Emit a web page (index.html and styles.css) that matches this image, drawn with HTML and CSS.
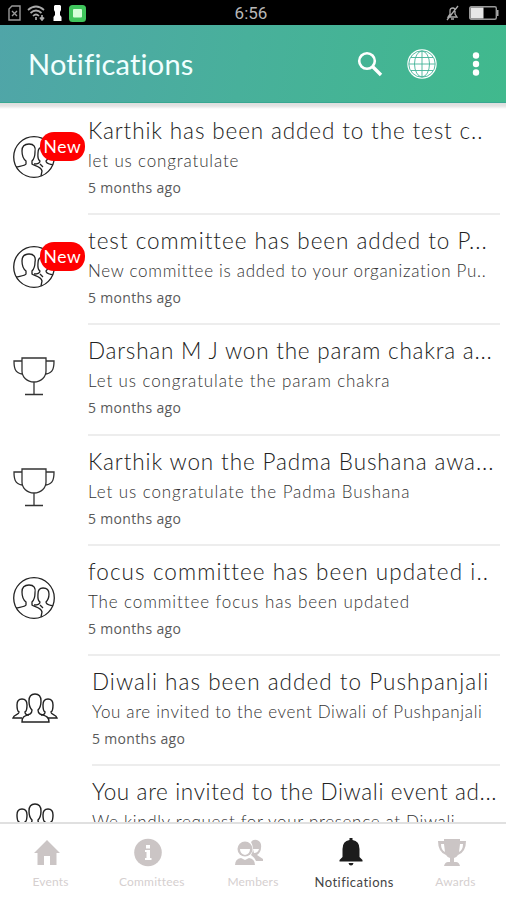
FILE: index.html
```html
<!DOCTYPE html>
<html lang="en">
<head>
<meta charset="utf-8">
<title>Notifications</title>
<link rel="stylesheet" href="styles.css">
</head>
<body>
<svg class="defs" width="0" height="0" aria-hidden="true">
  <defs>
    <symbol id="committee" viewBox="0 0 46 46">
      <g fill="none" stroke="#222" stroke-width="1.3">
        <circle cx="22" cy="23" r="20.3"/>
        <path d="M4 33C8 32 13 32 14 30V27C10 24 10 20 10 17C10 12 12 10 17 10C22 10 24 13 23 18C23 22 22 25 20 27V30C22 32 29 32 30 37L29 42"/>
        <path d="M22 30C25 30 28 30 28 27C25 25 26 21 26 19C26 15 28 13 31 13C35 13 37 15 37 19C37 23 36 25 34 27C34 30 38 30 41 31M28 30L31 33"/>
      </g>
    </symbol>
    <symbol id="trophy" viewBox="0 0 46 46">
      <g fill="none" stroke="#333" stroke-width="1.3">
        <path d="M10 4H34V17C34 23 29 28 22 28S10 23 10 17ZM10 7H2C2 14 3 19 10 20M34 7H42C42 14 41 19 34 20M22 28V40M13 40.500H31"/>
      </g>
    </symbol>
    <symbol id="group" viewBox="0 0 46 46">
      <g fill="none" stroke="#222" stroke-width="1.4">
        <path d="M18 29C20 28 20 26 20 25C17 22 17 19 17 16C17 11 19 9 23 9S29 11 29 16C29 19 29 22 26 25C26 26 26 28 28 29C33 31 37 31 37 37H10C10 31 13 31 18 29Z"/>
        <path d="M17 30C14 30 13 29 13 27C15 26 15 22 15 20C15 15 13 14 10 14S5 15 5 20C5 23 5 26 7 27C7 30 2 29 1 33H10M29 30C32 30 33 29 33 27C31 26 31 22 31 20C31 15 33 14 36 14S41 15 41 20C41 23 41 26 39 27C39 30 44 29 45 33H36"/>
      </g>
    </symbol>
  </defs>
</svg>
<div class="screen">
  <div class="status">
    <div class="status-left">
      <svg width="13" height="16" viewBox="0 0 13 16" fill="none" stroke="#999" stroke-width="1.4"><path d="M4 1H12V15H1V4ZM4 6L9 11M9 6L4 11"/></svg>
      <svg class="wifi" width="18" height="16" viewBox="0 0 18 16" fill="none" stroke="#aaa" stroke-width="1.7"><path d="M1 5Q9 -2 17 5M3.500 8Q9 3 14.500 8M6 11Q9 8 12 11M9 12V15M15 10V14M13 12.500L15 15L17 12.500"/></svg>
      <svg class="key" width="9" height="16" viewBox="0 0 9 16" fill="#fff"><path d="M2 0H7L8 1V5L7 7V10L8.500 12V16H.5V12L2 10V7L1 5V1Z"/></svg>
      <svg width="17" height="17" viewBox="0 0 17 17"><rect width="17" height="17" rx="3.500" fill="#40c55c"/><rect x="4" y="4" width="9" height="8.500" rx="1" fill="#d5ffd9"/></svg>
    </div>
    <div class="clock">6:56</div>
    <div class="status-right">
      <svg width="13" height="16" viewBox="0 0 13 16" fill="none" stroke="#aaa" stroke-width="1.300"><path d="M2 12L4 9V6Q4 3 7 3Q9 3 9 6V9L11 12ZM12 1L1 15M5 14H8"/></svg>
      <svg width="30" height="14" viewBox="0 0 30 14"><rect x=".7" y=".7" width="26.600" height="12.600" rx="1.500" fill="none" stroke="#999" stroke-width="1.400"/><rect x="1.500" y="1.500" width="13" height="11" fill="#e7e7e7"/><path d="M28 4H29.500V10H28Z" fill="#aaa"/></svg>
    </div>
  </div>
  <header class="bar">
    <h1>Notifications</h1>
    <div class="actions">
      <svg width="26" height="26" viewBox="0 0 26 26" fill="none" stroke="#fff"><circle cx="10" cy="10" r="7.800" stroke-width="2.600"/><path d="M15.500 15.500L24 24" stroke-width="3.400"/></svg>
      <svg class="globe" width="30" height="30" viewBox="0 0 30 30"><circle cx="15" cy="15" r="14.700" fill="#fff"/><g fill="none" stroke="#44b399" stroke-width=".9"><circle cx="15" cy="15" r="13.200"/><ellipse cx="15" cy="15" rx="7.500" ry="12.900"/><path d="M15 2V28M2 15H28M4 8.500H26M4 21.500H26"/></g></svg>
      <svg class="dots" width="8" height="24" viewBox="0 0 8 24" fill="#fff"><circle cx="4" cy="3.500" r="3.200"/><circle cx="4" cy="12" r="3.200"/><circle cx="4" cy="20.500" r="3.200"/></svg>
    </div>
  </header>
  <main class="list">
    <article class="row"><div class="pic"><svg><use href="#committee"/></svg><span class="new">New</span></div><div class="text"><h2 class="t1">Karthik has been added to the test c..</h2><p class="s1">let us congratulate</p><time>5 months ago</time></div></article>
    <article class="row"><div class="pic"><svg><use href="#committee"/></svg><span class="new">New</span></div><div class="text"><h2 class="t2">test committee has been added to P...</h2><p class="s2">New committee is added to your organization Pu..</p><time>5 months ago</time></div></article>
    <article class="row"><div class="pic"><svg><use href="#trophy"/></svg></div><div class="text"><h2 class="t3">Darshan M J won the param chakra a...</h2><p class="s3">Let us congratulate the param chakra</p><time>5 months ago</time></div></article>
    <article class="row"><div class="pic"><svg><use href="#trophy"/></svg></div><div class="text"><h2 class="t4">Karthik won the Padma Bushana awa...</h2><p class="s4">Let us congratulate the Padma Bushana</p><time>5 months ago</time></div></article>
    <article class="row"><div class="pic"><svg><use href="#committee"/></svg></div><div class="text"><h2 class="t5">focus committee has been updated i..</h2><p class="s5">The committee focus has been updated</p><time>5 months ago</time></div></article>
    <article class="row event"><div class="pic"><svg><use href="#group"/></svg></div><div class="text"><h2 class="t6">Diwali has been added to Pushpanjali</h2><p class="s6">You are invited to the event Diwali of Pushpanjali</p><time>5 months ago</time></div></article>
    <article class="row event"><div class="pic"><svg><use href="#group"/></svg></div><div class="text"><h2 class="t7">You are invited to the Diwali event ad...</h2><p class="s7">We kindly request for your presence at Diwali</p></div></article>
  </main>
  <nav class="tabs">
    <div class="tab"><svg width="30" height="30" viewBox="0 0 30 30"><path d="M15 2L28 15H24.500V27H18V18H12V27H5.500V15H2Z"/></svg><span class="n1">Events</span></div>
    <div class="tab"><svg width="30" height="30" viewBox="0 0 30 30"><circle cx="15" cy="14.500" r="13.800"/><path d="M13 7H17V10.500H13ZM12 12H17V20H18.500V22H12V20H13.500V14H12Z" fill="#fff"/></svg><span class="n2">Committees</span></div>
    <div class="tab"><svg width="32" height="30" viewBox="0 0 32 30"><path d="M18 4Q20 1 24 2Q29 4 28 10Q28 14 24 17L30 21V23H23Q21 19 18 17Q22 11 18 4Z"/><circle cx="12" cy="11" r="7.500"/><path d="M7 11H17Q17 16 12 17Q7 16 7 11Z" fill="#fff"/><path d="M2 27Q2 21 8 20L12 22L16 20Q22 21 22 27Z"/><path d="M20 11H26Q25 15 21 15Z" fill="#fff"/></svg><span class="n3">Members</span></div>
    <div class="tab active"><svg width="30" height="30" viewBox="0 0 30 30"><path d="M13.500 0H16.500V2Q23.500 3 23.500 11V19L26.500 22V23.500H3.500V22L6.500 19V11Q6.500 3 13.500 2ZM12.500 25H17.500Q17 27.500 15 27.500T12.500 25Z"/></svg><span class="n4">Notifications</span></div>
    <div class="tab"><svg width="30" height="30" viewBox="0 0 30 30"><path d="M7 1H23V3H29Q29 14 21 17Q19 20 17 20V24H19Q22 24 23 28H7Q8 24 11 24H13V20Q11 20 9 17Q1 14 1 3H7ZM7 6H4Q4 12 8 14ZM23 6L22 14Q26 12 26 6Z" fill-rule="evenodd"/></svg><span class="n5">Awards</span></div>
  </nav>
</div>
</body>
</html>
```
FILE: styles.css
```css
* { box-sizing: border-box; }
body { margin: 0; background: #fff; font-family: Lato, "Open Sans", sans-serif; }
h1, h2, p { margin: 0; font-weight: 300; }
svg { display: block; flex: none; }
.defs { position: absolute; }
.screen { width: 506px; height: 900px; display: flex; flex-direction: column; overflow: hidden; }

.status { height: 25px; flex: none; background: #000; display: grid; grid-template-columns: 1fr auto 1fr; align-items: center; padding: 1px 7px 0 8px; }
.status-left, .status-right { display: flex; align-items: center; }
.status-right { justify-content: flex-end; gap: 10px; }
.wifi { margin-left: 6px; }
.key { margin: 0 7px 0 8px; }
.clock { margin-right: 5px; color: #b8b8b8; font: 17px/22px Roboto, sans-serif; }

.bar { height: 78px; flex: none; display: flex; align-items: center; justify-content: space-between; padding: 0 26px 0 28px; background: linear-gradient(100deg, #50a5a8 0%, #48b09b 48%, #40b98d 100%); border-bottom: 1px solid #38a892; }
.bar h1 { color: #f1ffff; font-size: 29px; font-weight: 400; letter-spacing: .2px; line-height: 36px; }
.actions { display: flex; align-items: center; }
.globe { margin: 0 35px 0 24px; }

.list { flex: 1; min-height: 0; overflow: hidden; padding-top: 2px; background: linear-gradient(#dedede 0, #e4e4e4 3px, #fff 6px); }
.row { display: flex; height: 110.2px; padding-right: 6px; }
.pic { position: relative; width: 88px; padding: 29px 0 0 12px; flex: none; }
.pic svg { width: 46px; height: 46px; }
.new { position: absolute; left: 40px; top: 27px; width: 45px; height: 29px; border-radius: 14px; background: #f00; color: #fff; font-size: 17.5px; letter-spacing: .7px; line-height: 29px; text-align: center; }
.text { flex: 1; min-width: 0; border-bottom: 2px solid #ededed; white-space: nowrap; }
.text h2 { padding-top: 12px; font-size: 22.5px; line-height: 28px; color: #222; }
.text p { padding-top: 5px; font-size: 17px; line-height: 22px; color: #333; }
.text time { display: block; padding-top: 6px; font: 14px/20px "Open Sans", sans-serif; letter-spacing: .33px; color: #5a5a5a; }
.event .pic { width: 92px; }

/* Tracking per line */
.text .t1 { letter-spacing: .87px; }
.text .t2 { letter-spacing: .97px; }
.text .t3 { letter-spacing: .78px; }
.text .t4 { letter-spacing: .88px; }
.text .t5 { letter-spacing: 1.08px; }
.text .t6 { letter-spacing: 1.03px; }
.text .t7 { letter-spacing: .64px; }
.text .s1 { letter-spacing: .84px; }
.text .s2 { letter-spacing: .71px; }
.text .s3 { letter-spacing: .89px; }
.text .s4 { letter-spacing: .92px; }
.text .s5 { letter-spacing: .89px; }
.text .s6 { letter-spacing: .64px; }
.text .s7 { letter-spacing: .67px; }

.tabs { height: 78px; flex: none; display: grid; grid-template-columns: repeat(5, 1fr); border-top: 2px solid #e0e0e0; background: #fff; }
.tab { display: flex; flex-direction: column; align-items: center; padding-top: 14px; fill: #cbc5c5; color: #d5cfcf; font-size: 12px; line-height: 18px; }
.tab svg { margin-right: 7px; }
.tab span { margin-top: 5px; letter-spacing: .2px; }
.tab.active { fill: #1c1c1c; color: #444; }
.tab.active span { font-size: 13px; letter-spacing: .5px; }
```
